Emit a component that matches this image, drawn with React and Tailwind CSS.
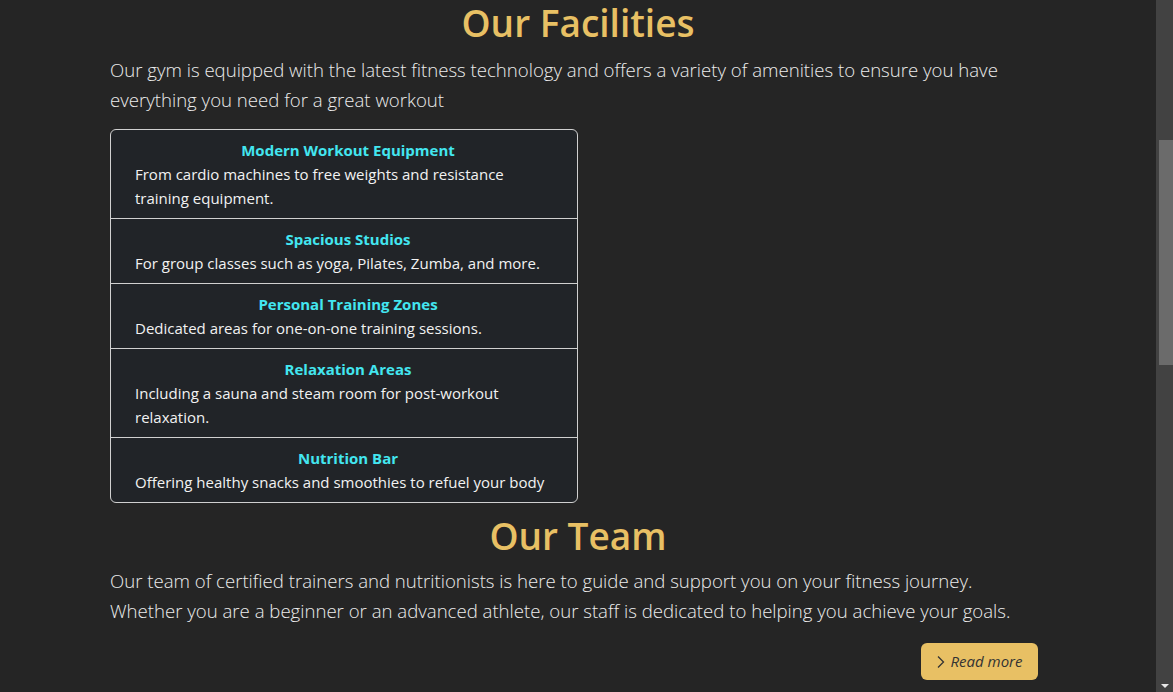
import React from "react";

const items = [
  { t: "Modern Workout Equipment", d: "From cardio machines to free weights and resistance training equipment." },
  { t: "Spacious Studios", d: "For group classes such as yoga, Pilates, Zumba, and more." },
  { t: "Personal Training Zones", d: "Dedicated areas for one-on-one training sessions." },
  { t: "Relaxation Areas", d: "Including a sauna and steam room for post-workout relaxation." },
  { t: "Nutrition Bar", d: "Offering healthy snacks and smoothies to refuel your body" },
];

export default function App() {
  return (
    <div className="flex h-[692px] w-[1173px] overflow-hidden bg-[#252525]" style={{ fontFamily: '"Open Sans", "Noto Sans", sans-serif' }}>
      <div className="flex-1 pl-[110px] pr-[110px]">
        <h1 className="text-center text-[37px] font-semibold leading-[46px] text-[#e8c064]">Our Facilities</h1>
        <p className="mt-[9px] text-[18.6px] font-light leading-[30px] text-[#ececec]">
          Our gym is equipped with the latest fitness technology and offers a variety of amenities to ensure you have everything you need for a great workout
        </p>
        <ul className="mt-[14px] w-[468px] overflow-hidden rounded-[6px] border border-[#d0d0d0] bg-[#212428]">
          {items.map((it, i) => (
            <li key={i} className={`py-2 pl-6 pr-4 ${i > 0 ? "border-t border-[#d0d0d0]" : ""}`}>
              <div className="text-center text-[15px] font-bold leading-6 text-[#43e6f0]">{it.t}</div>
              <div className="text-[15px] leading-6 text-[#f2f2f2]">{it.d}</div>
            </li>
          ))}
        </ul>
        <h2 className="mt-[10px] text-center text-[37px] font-semibold leading-[46px] text-[#e8c064]">Our Team</h2>
        <p className="mt-[7px] text-[18.6px] font-light leading-[30px] text-[#ececec]">
          Our team of certified trainers and nutritionists is here to guide and support you on your fitness journey. Whether you are a beginner or an advanced athlete, our staff is dedicated to helping you achieve your goals.
        </p>
        <div className="mt-[17px] flex justify-end pr-[8px]">
          <button className="flex h-[37px] w-[117px] items-center justify-center gap-1 rounded-[6px] bg-[#e8c064] text-[15px] italic text-[#333]">
            <svg width="10" height="14" viewBox="0 0 10 14" fill="none" stroke="#333" strokeWidth="1.3"><path d="M2 1.5 L7.5 7 L2 12.5" /></svg>
            Read more
          </button>
        </div>
      </div>
      <div className="flex h-full w-[17px] flex-col bg-[#424242]">
        <div className="mt-[140px] ml-[3px] h-[225px] w-[14px] bg-[#6b6b6b]" />
        <div className="flex-1" />
        <div className="mb-[3px] flex justify-center">
          <svg width="8" height="5" viewBox="0 0 8 5"><path d="M0 0 H8 L4 4 Z" fill="#e8e8e8" /></svg>
        </div>
      </div>
    </div>
  );
}
